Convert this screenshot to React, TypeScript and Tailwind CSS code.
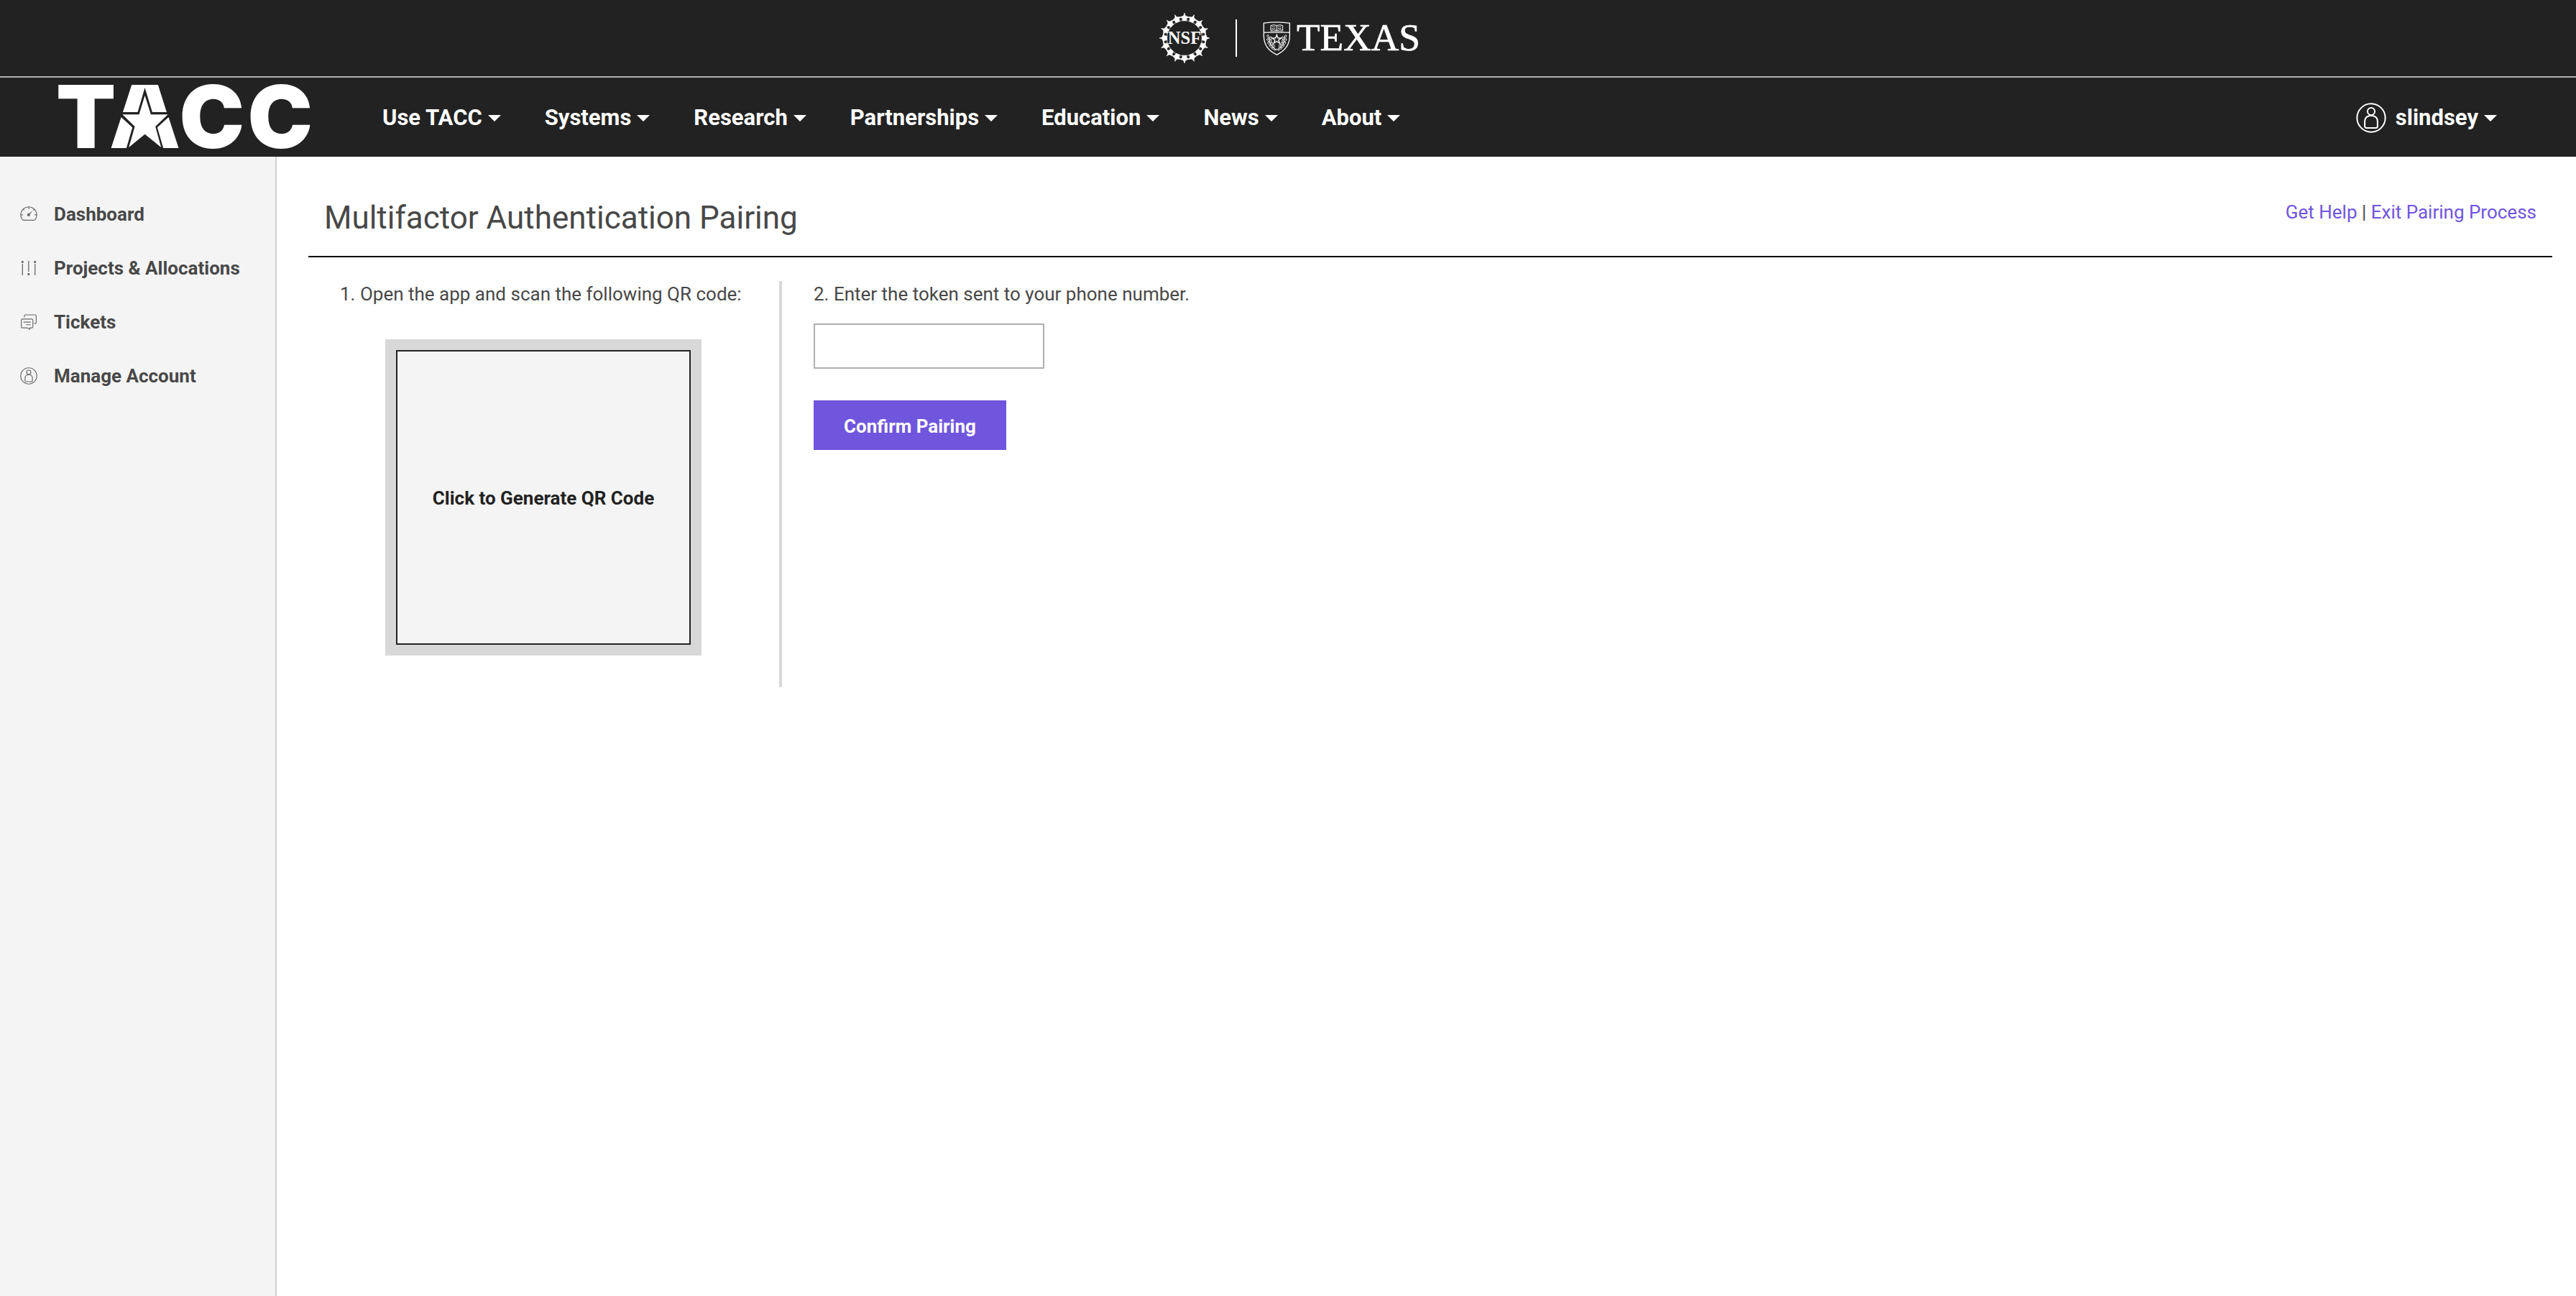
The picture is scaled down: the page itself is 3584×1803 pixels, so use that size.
import type { ReactNode } from "react";

const NAV = ["Use TACC", "Systems", "Research", "Partnerships", "Education", "News", "About"];

const TURNS = Array.from({ length: 16 }, (_, i) => i * 22.5);

function NsfLogo() {
  return (
    <svg viewBox="-104 -104 208 208" className="size-[70px]" role="img" aria-label="NSF">
      <circle r="73" fill="none" stroke="#a8a8a8" strokeWidth="3" />
      <circle r="87" fill="none" stroke="#d8d8d8" strokeWidth="4" />
      {TURNS.map((a) => (
        <path
          key={a}
          transform={`rotate(${a})`}
          d="M0 -104 Q2 -93 6 -91 L16 -88 Q8 -84 8 -72 L-8 -72 Q-8 -84 -16 -88 L-6 -91 Q-2 -93 0 -104Z"
          fill="#fff"
          stroke="#fff"
          strokeWidth="2"
        />
      ))}
      <text
        x="0"
        y="25"
        textAnchor="middle"
        fontSize="73"
        fontWeight="700"
        fill="#fff"
        stroke="#222"
        strokeWidth="3"
        paintOrder="stroke"
        className="font-['Liberation_Serif',serif]"
      >
        NSF
      </text>
    </svg>
  );
}

const LEAVES: [number, number, number][] = [
  [522, 153, -25],
  [522, 168, -40],
  [526, 182, -50],
  [534, 194, -60],
  [544, 203, -75],
  [532, 160, 30],
  [532, 172, 20],
  [537, 183, 5],
  [545, 192, -10],
];

function TexasLogo() {
  return (
    <svg viewBox="500 88 654 146" className="h-[49px] w-[218px] overflow-visible" role="img" aria-label="Texas">
      <path d="M504 97 Q558 89 612 97 V150 Q612 204 558 229 Q504 204 504 150Z" fill="none" stroke="#fff" strokeWidth="4" />
      <path d="M504 136H612" stroke="#fff" strokeWidth="4" />
      <path d="M558 107 Q545 102 533 107 V127 Q545 123 558 128 Q571 123 583 127 V107 Q571 102 558 107 V128" fill="none" stroke="#fff" strokeWidth="3" />
      <path d="M538 112H553M538 119H553M563 112H578M563 119H578" stroke="#fff" strokeWidth="3" strokeDasharray="5 2" />
      <path d="M530 131H586" stroke="#ddd" strokeWidth="2" />
      <path
        d="M558 146 L562.5 159 L577 159 L565.5 167.5 L570 181 L558 173 L546 181 L550.5 167.5 L539 159 L553.500 159Z"
        fill="none"
        stroke="#fff"
        strokeWidth="4"
      />
      <path d="M525 150 Q524 195 558 210 Q592 195 591 150" fill="none" stroke="#ddd" strokeWidth="2" />
      {LEAVES.map(([x, y, a]) => (
        <g key={`${x}-${y}`} fill="none" stroke="#fff" strokeWidth="2.5">
          <ellipse cx={x} cy={y} rx="3.500" ry="7" transform={`rotate(${a} ${x} ${y})`} />
          <ellipse cx={1116 - x} cy={y} rx="3.500" ry="7" transform={`rotate(${-a} ${1116 - x} ${y})`} />
        </g>
      ))}
      <path d="M548 212L558 205L568 212" fill="none" stroke="#fff" strokeWidth="3" />
      <text x="641" y="212" fontSize="160" fill="#fff" stroke="#fff" strokeWidth="2" className="font-['Liberation_Serif',serif]">
        TEXAS
      </text>
    </svg>
  );
}

function TaccLogo() {
  return (
    <svg viewBox="57 54 1057 276" className="h-[92px] w-[352px] overflow-visible" role="img" aria-label="TACC">
      <g fill="#fff">
        <g fontSize="364" fontWeight="900" textAnchor="middle" className="font-[Inter,sans-serif]">
          <text x="179" y="318">T</text>
          <text x="705" y="318">C</text>
          <text x="990" y="318">C</text>
        </g>
        <path d="M370 54H480L516 168H456L425 66L395 168H333Z" />
        <path d="M425 98L450 178H521L469 228L493 315L425 260L358 315L383 228L331 178H401Z" />
        <path d="M326 189L373 232L348 318H284Z" />
        <path d="M524 189L566 318H502L477 232Z" />
      </g>
    </svg>
  );
}

function Caret() {
  return (
    <svg viewBox="0 0 18 9" className="h-[9px] w-[18px]" aria-hidden="true">
      <path d="M0 0H18L9 9Z" fill="currentColor" />
    </svg>
  );
}

function UserIcon({ className, stroke }: { className: string; stroke: number }) {
  return (
    <svg viewBox="113 69 125 125" className={className} fill="none" stroke="currentColor" strokeWidth={stroke} aria-hidden="true">
      <circle cx="175.500" cy="131.500" r="58.500" />
      <circle cx="175.500" cy="105" r="15" />
      <path d="M165 124 Q150 128 149 146 V166 Q149 173 156 173 H195 Q202 173 202 166 V146 Q201 128 186 124 Q175 119 165 124Z" />
    </svg>
  );
}

const iconClass = "size-6 text-[#686868]";

const SIDE: { label: string; icon: ReactNode }[] = [
  {
    label: "Dashboard",
    icon: (
      <svg viewBox="83 83 73 73" className={iconClass} fill="none" stroke="currentColor" strokeWidth="3.500" aria-hidden="true">
        <path d="M98 145 Q93 145 91 141 A34 34 0 1 1 148 141 Q146 145 141 145Z" />
        <path d="M119.500 88V98M85 122H95M144 122H154M96 98L101 103M143 98L138 103M119 122L132 109" />
        <circle cx="119" cy="122" r="4.500" fill="currentColor" />
      </svg>
    ),
  },
  {
    label: "Projects & Allocations",
    icon: (
      <svg viewBox="83 305 73 73" className={iconClass} fill="currentColor" stroke="none" aria-hidden="true">
        <path d="M91 323h4v49h-4zM117 311h4v46h-4zM144 323h4v49h-4z" />
        <circle cx="93" cy="315" r="5" />
        <circle cx="119" cy="367" r="5" />
        <circle cx="146" cy="315" r="5" />
      </svg>
    ),
  },
  {
    label: "Tickets",
    icon: (
      <svg viewBox="83 529 73 73" className={iconClass} fill="none" stroke="currentColor" strokeWidth="3.500" strokeLinejoin="round" aria-hidden="true">
        <path d="M101 546V539Q101 535 105 535H147Q151 535 151 539V568Q151 572 147 572H142" />
        <path d="M92 553H132Q137 553 137 558V585Q137 590 132 590H124V597L113 590H92Q88 590 88 585V558Q88 553 92 553Z" />
        <path d="M97 566H128M108 577H128" />
      </svg>
    ),
  },
  { label: "Manage Account", icon: <UserIcon className={iconClass} stroke={6} /> },
];

export default function App() {
  return (
    <div className="flex min-h-screen flex-col bg-white font-[Roboto,sans-serif] text-[26px] leading-9 text-[#484848]">
      <header className="bg-[#222] text-white">
        <div className="flex h-[108px] items-center justify-center gap-9 border-b-2 border-[#afafaf] pl-1">
          <NsfLogo />
          <span className="h-[52px] w-0.5 bg-white" />
          <TexasLogo />
        </div>
        <nav className="flex h-[110px] items-center pt-0.5 pr-[110px] pl-[79px] text-[31px] font-bold">
          <TaccLogo />
          <ul className="ml-[101px] flex gap-[61px]">
            {NAV.map((n) => (
              <li key={n}>
                <button type="button" className="flex items-center gap-2 whitespace-nowrap">
                  {n}
                  <Caret />
                </button>
              </li>
            ))}
          </ul>
          <button type="button" className="ml-auto flex items-center">
            <UserIcon className="size-[42px]" stroke={6} />
            <span className="mr-2 ml-[13px]">slindsey</span>
            <Caret />
          </button>
        </nav>
      </header>

      <div className="flex flex-1">
        <aside className="w-[385px] shrink-0 border-r-2 border-[#d0d0d0] bg-[#f4f4f4] pt-[42px]">
          <ul>
            {SIDE.map(({ label, icon }) => (
              <li key={label}>
                <a href="#" className="flex h-[75px] items-center gap-[23px] pl-7 font-bold whitespace-nowrap">
                  {icon}
                  {label}
                </a>
              </li>
            ))}
          </ul>
        </aside>

        <main className="flex-1 pr-[33px] pl-11">
          <div className="flex items-start justify-between border-b-2 border-black px-[22px] pt-[59px] pb-[27px]">
            <h1 className="text-[44px] leading-[52px]">Multifactor Authentication Pairing</h1>
            <p>
              <a href="#" className="text-[#7055dd]">Get Help</a> |{" "}
              <a href="#" className="text-[#7055dd]">Exit Pairing Process</a>
            </p>
          </div>

          <div className="mt-[33px] flex items-start">
            <section className="w-[659px] border-r-4 border-[#d8d8d8] pb-11 pl-11">
              <p className="leading-[37px]">1. Open the app and scan the following QR code:</p>
              <div className="mt-11 ml-[63px] size-[440px] bg-[#d8d8d8] p-[15px]">
                <button type="button" className="size-full border-2 border-[#222] bg-[#f4f4f4] pt-0.5 font-bold text-[#222]">
                  Click to Generate QR Code
                </button>
              </div>
            </section>
            <form className="flex flex-col items-start pl-11">
              <label htmlFor="token" className="leading-[37px]">
                2. Enter the token sent to your phone number.
              </label>
              <input id="token" type="text" className="mt-[22px] h-[63px] w-[321px] border-2 border-[#afafaf] px-3" />
              <button type="button" className="mt-11 h-[69px] w-[268px] bg-[#7055dd] pt-0.5 font-bold text-white">
                Confirm Pairing
              </button>
            </form>
          </div>
        </main>
      </div>
    </div>
  );
}
